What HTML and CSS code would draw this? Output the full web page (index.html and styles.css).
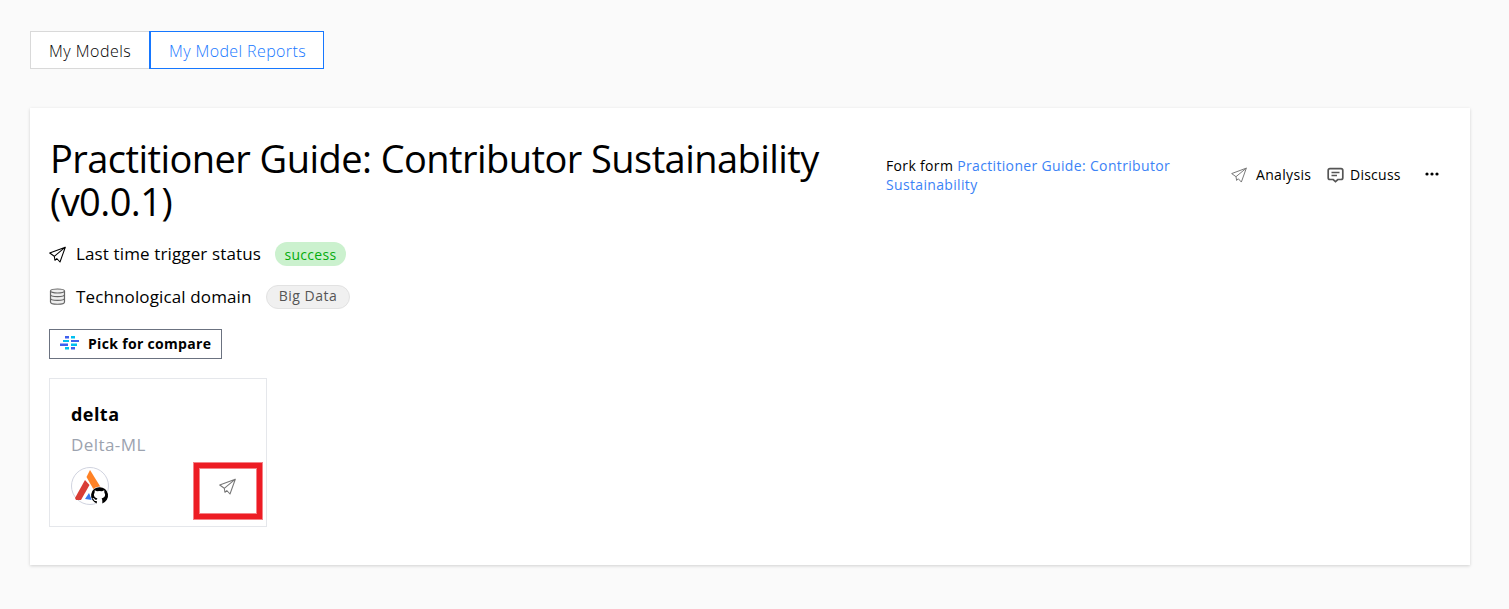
FILE: index.html
```html
<!DOCTYPE html>
<html lang="en">
<head>
<meta charset="utf-8">
<title>My Model Reports</title>
<link rel="stylesheet" href="styles.css">
</head>
<body>
<svg class="defs" aria-hidden="true">
  <symbol id="plane" viewBox="0 0 17 17"><path d="M.7 7 5.300 10.300 6 14.300 7.800 12.500 11 16 16.300 1.200zM5.300 10.300 16.300 1.200" fill="none" stroke="currentColor" stroke-width="1.050" stroke-linejoin="round"/></symbol>
</svg>
<nav class="tabs">
  <a class="tab"><span>My Models</span></a>
  <a class="tab tab-active"><span>My Model Reports</span></a>
</nav>
<main class="panel">
  <header class="head">
    <h1 class="title">Practitioner Guide: Contributor Sustainability (v0.0.1)</h1>
    <p class="fork">Fork form <a>Practitioner Guide: Contributor Sustainability</a></p>
    <div class="actions">
      <svg class="plane-sm"><use href="#plane"/></svg>
      <span class="analysis">Analysis</span>
      <svg class="chat" viewBox="0 0 17 17"><path d="M3 1.700h11q1.800 0 1.800 1.800v7.200q0 1.800-1.800 1.800h-3.200L8.500 14.600 6.200 12.500H3q-1.800 0-1.800-1.800V3.500Q1.200 1.700 3 1.700z" fill="none" stroke="#555" stroke-width="1.700"/><path d="M4.500 5.500h8M4.500 8.500h5.500" stroke="#555" stroke-width="1.300"/></svg>
      <span class="discuss">Discuss</span>
      <svg class="dots" viewBox="0 0 14 4"><circle cx="2" cy="2" r="1.600"/><circle cx="7" cy="2" r="1.600"/><circle cx="12" cy="2" r="1.600"/></svg>
    </div>
  </header>
  <div class="meta">
    <svg class="icon"><use href="#plane"/></svg>
    <span class="status">Last time trigger status</span>
    <b class="pill success"><span>success</span></b>
  </div>
  <div class="meta domain-row">
    <svg class="icon database" viewBox="0 0 17 17"><g fill="#eee" stroke="#666" stroke-width="1.200"><path d="M1.500 3v11c0 3 14 3 14 0V3"/><ellipse cx="8.500" cy="3" rx="7" ry="2"/><path d="M1.500 6.700c0 2.500 14 2.500 14 0M1.500 10.400c0 2.500 14 2.500 14 0" fill="none"/></g></svg>
    <span class="domain">Technological domain</span>
    <b class="pill tag"><span>Big Data</span></b>
  </div>
  <button class="compare">
    <svg viewBox="0 0 20 14"><path fill="#00bfef" d="M11 0h4v2.500h-4zM3 4h6v2H3zM11 7.500h6V10h-6zM5 11h4v2.500H5z"/><path fill="#3f60ed" d="M5 0h4v2.500H5zM11 4h8v2h-8zM0 7.500h8V10H0zM11 11h4v2.500h-4z"/></svg>
    <span>Pick for compare</span>
  </button>
  <article class="repo">
    <h2><span>delta</span></h2>
    <p><span>Delta-ML</span></p>
    <div class="repo-foot">
      <svg class="avatar" viewBox="0 0 39 39"><circle cx="19" cy="19" r="18.500" fill="#fff" stroke="#d0d3df"/><path d="M4 31 14 13 18.500 18 10 33 5 33z" fill="#d93d36"/><path d="M19 3 32 24 24 25 15.500 10z" fill="#ff8225"/><path d="M14 32 18 26 21 33z" fill="#3979ec"/><circle cx="28.500" cy="28.500" r="9" fill="#fff"/><path d="M28.500 20.200a8.300 8.300 0 0 0-2.700 16.200v-2.500c-2.200.4-2.800-.8-3.400-2l-1.100-.8c1.300-.2 1.900.4 2.500 1.200.6.700 1.400.6 2.100.3l.5-1.100c-2.600-.5-3.500-2-3.500-3.900l.8-2.300v-2l2.300 1q2.500-.7 5 0l2.300-1v2l.8 2.300c0 2-1 3.400-3.500 3.900.5.600.7 1.300.7 2.100v2.800A8.300 8.300 0 0 0 28.500 20.200z" fill="#000"/></svg>
      <svg class="repo-plane"><use href="#plane"/></svg>
    </div>
    <i class="highlight"></i>
  </article>
</main>
</body>
</html>
```
FILE: styles.css
```css
* { box-sizing: border-box; }
body { margin: 0; padding: 31px 30px 0; height: 609px; background: #fafafa; color: #000; font-family: "Open Sans", "Noto Sans", sans-serif; }
h1, h2, p { margin: 0; }
svg { display: block; flex: none; }
.defs { position: absolute; width: 0; height: 0; }
.tabs { display: flex; height: 38px; }
.tab { display: flex; align-items: center; width: 120px; height: 38px; padding: 2px 0 0 18px; border: 1px solid #d9d9d9; border-right: 0; background: #fff; font-size: 16px; font-weight: 350; letter-spacing: .48px; white-space: nowrap; }
.tab-active { width: 175px; height: 38px; margin-left: -1px; border: 1px solid #1677ff; border-left-width: 2px; color: #1677ff; padding-left: 18px; letter-spacing: .39px; }
.panel { width: 1440px; height: 457px; margin-top: 39px; padding: 29px 20px 0 19px; background: #fff; box-shadow: 0 1px 3px rgba(0,0,0,.17); }
.head { display: flex; height: 88px; }
.title { width: 837px; padding: 0 40px 0 1px; font-size: 38px; line-height: 43px; font-weight: 400; letter-spacing: -.56px; }
.fork { width: 300px; padding-top: 19px; font-size: 14px; line-height: 19px; letter-spacing: .34px; }
.fork a { color: #3b82f6; }
.actions { display: flex; align-items: center; height: 24px; margin: 25px 0 0 45px; font-size: 14px; letter-spacing: .33px; white-space: nowrap; }
.plane-sm { width: 16px; height: 16px; margin-top: 2px; color: #777; }
.analysis { width: 71px; margin-left: 9px; }
.chat { width: 17px; height: 17px; margin-top: 2px; }
.discuss { width: 75px; margin-left: 6px; letter-spacing: .25px; }
.dots { width: 14px; height: 4px; }
.meta { display: flex; align-items: center; height: 24px; margin-top: 17px; font-size: 17px; letter-spacing: .13px; white-space: nowrap; }
.domain-row { margin-top: 19px; }
.icon { width: 17px; height: 17px; margin-right: 10px; }
.database { margin-top: -1px; }
.status, .domain { padding-bottom: 2px; }
.status { width: 199px; }
.domain { width: 190px; }
.pill { display: flex; align-items: center; justify-content: center; height: 24px; border-radius: 12px; font-size: 14px; font-weight: 400; }
.success { width: 71px; background: #cbf1ce; color: #05ac0c; letter-spacing: .3px; }
.tag { width: 84px; border: 1px solid #e2e2e2; background: #f0f0f0; color: #555; padding-bottom: 3px; letter-spacing: .5px; }
.compare { display: flex; align-items: center; width: 173px; height: 30px; margin-top: 20px; padding: 0 0 2px 10px; border: 1px solid #6b7280; background: #fff; color: #000; font: 700 14px "Open Sans", sans-serif; letter-spacing: .32px; white-space: nowrap; }
.compare svg { width: 20px; height: 14px; margin-right: 8px; }
.repo { position: relative; width: 218px; height: 149px; margin-top: 19px; padding: 21px 20px 0 21px; border: 1px solid #e5e7eb; }
.repo h2 { height: 28px; font-size: 18px; line-height: 28px; font-weight: 700; letter-spacing: .45px; }
.repo p { height: 28px; margin-top: 3px; color: #9ca3af; font-size: 17px; line-height: 28px; letter-spacing: .42px; }
.repo-foot { display: flex; justify-content: space-between; height: 39px; margin-top: 8px; }
.avatar { width: 39px; height: 39px; }
.repo-plane { width: 17px; height: 17px; margin: 11px 10px 0 0; color: #777; }
.highlight { position: absolute; left: 144px; top: 84px; width: 68px; height: 56px; border: 5px solid #ed1c24; box-shadow: 0 0 0 1px rgba(237,28,36,.55), inset 0 0 0 1px rgba(237,28,36,.55); }
```
